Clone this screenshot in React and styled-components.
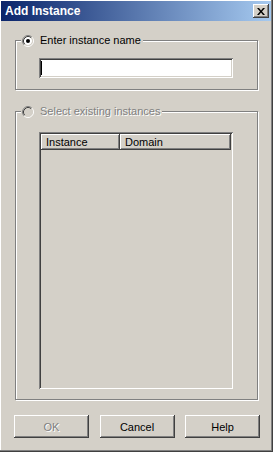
import React from 'react';
import styled, { createGlobalStyle } from 'styled-components';

const GlobalStyle = createGlobalStyle`
  body {
    margin: 0;
    font-family: "Liberation Sans", Arial, sans-serif;
    font-size: 11px;
    color: #000;
  }
`;

const raised = `
  box-shadow: inset -1px -1px #404040, inset 1px 1px #ffffff,
    inset -2px -2px #808080, inset 2px 2px #d4d0c8;
`;

const sunken = `
  box-shadow: inset 1px 1px #808080, inset -1px -1px #ffffff,
    inset 2px 2px #404040, inset -2px -2px #d4d0c8;
`;

const Window = styled.div`
  width: 273px;
  height: 452px;
  box-sizing: border-box;
  padding: 1px 2px 2px 1px;
  background: #d4d0c8;
  display: flex;
  flex-direction: column;
  box-shadow: inset -1px -1px #404040, inset -2px -2px #808080,
    inset 1px 1px #ffffff;
`;

const TitleBar = styled.div`
  height: 20px;
  flex: none;
  display: flex;
  align-items: center;
  justify-content: space-between;
  padding: 0 2px 0 4px;
  background: linear-gradient(to right, #0a246a, #a6caf0);
`;

const Title = styled.span`
  color: #fff;
  font-weight: bold;
  font-size: 12px;
`;

const CloseButton = styled.div`
  width: 16px;
  height: 14px;
  box-sizing: border-box;
  background: #d4d0c8;
  display: flex;
  align-items: center;
  justify-content: center;
  ${raised}
`;

const Body = styled.div`
  display: flex;
  flex-direction: column;
  padding-top: 13px;
`;

const Group = styled.fieldset`
  margin: ${(p) => p.$gap}px 0 0 14px;
  padding: 0;
  min-width: 0;
  width: 243px;
  box-sizing: border-box;
  border: 1px solid #808080;
  box-shadow: 1px 1px 0 #ffffff, inset 1px 1px 0 #ffffff;
`;

const Legend = styled.legend`
  margin-left: 5px;
  padding: 0 2px 0 1px;
  height: 13px;
  line-height: 13px;
  display: flex;
  align-items: center;
  gap: 6px;
  background: #d4d0c8;
  color: ${(p) => (p.$disabled ? '#808080' : '#000')};
  text-shadow: ${(p) => (p.$disabled ? '1px 1px 0 #ffffff' : 'none')};
`;

const GroupBody = styled.div`
  padding: ${(p) => p.$top}px 0 ${(p) => p.$bottom}px 23px;
`;

const TextField = styled.div`
  width: 194px;
  height: 20px;
  box-sizing: border-box;
  background: #fff;
  display: flex;
  align-items: center;
  padding-left: 2px;
  ${sunken}
`;

const Caret = styled.span`
  width: 1px;
  height: 14px;
  background: #000;
`;

const ListBox = styled.div`
  width: 194px;
  height: 257px;
  box-sizing: border-box;
  padding: 2px;
  background: #d4d0c8;
  ${sunken}
`;

const HeaderRow = styled.div`
  display: flex;
  height: 16px;
`;

const HeaderCell = styled.div`
  width: ${(p) => p.$width}px;
  box-sizing: border-box;
  padding-left: 5px;
  line-height: 16px;
  ${raised}
`;

const ButtonRow = styled.div`
  display: flex;
  justify-content: space-between;
  width: 246px;
  margin: 15px 0 0 13px;
`;

const Button = styled.div`
  width: 75px;
  height: 23px;
  box-sizing: border-box;
  display: flex;
  align-items: center;
  justify-content: center;
  color: ${(p) => (p.$disabled ? '#808080' : '#000')};
  text-shadow: ${(p) => (p.$disabled ? '1px 1px 0 #ffffff' : 'none')};
  ${raised}
`;

const Radio = ({ checked, disabled }) => (
  <svg width="12" height="12" viewBox="0 0 12 12">
    <circle cx="6" cy="6" r="4" fill={disabled ? '#d4d0c8' : '#fff'} />
    <path d="M2.11 9.89 A5.5 5.5 0 0 1 9.89 2.11" stroke="#808080" fill="none" />
    <path d="M9.89 2.11 A5.5 5.5 0 0 1 2.11 9.89" stroke="#ffffff" fill="none" />
    <path d="M2.82 9.18 A4.5 4.5 0 0 1 9.18 2.82" stroke="#404040" fill="none" />
    <path d="M9.18 2.82 A4.5 4.5 0 0 1 2.82 9.18" stroke="#d4d0c8" fill="none" />
    {checked && <circle cx="6" cy="6" r="2" fill="#000" />}
  </svg>
);

const CloseGlyph = () => (
  <svg width="8" height="7" viewBox="0 0 8 7">
    <path d="M0 0h2l2 2.4L6 0h2L5 3.5 8 7H6L4 4.6 2 7H0l3-3.5z" fill="#000" />
  </svg>
);

const App = () => {
  return (
    <Window>
      <GlobalStyle />
      <TitleBar>
        <Title>Add Instance</Title>
        <CloseButton>
          <CloseGlyph />
        </CloseButton>
      </TitleBar>
      <Body>
        <Group $gap={0}>
          <Legend>
            <Radio checked />
            Enter instance name
          </Legend>
          <GroupBody $top={11} $bottom={11}>
            <TextField>
              <Caret />
            </TextField>
          </GroupBody>
        </Group>
        <Group $gap={15}>
          <Legend $disabled>
            <Radio disabled />
            Select existing instances
          </Legend>
          <GroupBody $top={14} $bottom={10}>
            <ListBox>
              <HeaderRow>
                <HeaderCell $width={79}>Instance</HeaderCell>
                <HeaderCell $width={111}>Domain</HeaderCell>
              </HeaderRow>
            </ListBox>
          </GroupBody>
        </Group>
        <ButtonRow>
          <Button $disabled>OK</Button>
          <Button>Cancel</Button>
          <Button>Help</Button>
        </ButtonRow>
      </Body>
    </Window>
  );
};

export default App;
